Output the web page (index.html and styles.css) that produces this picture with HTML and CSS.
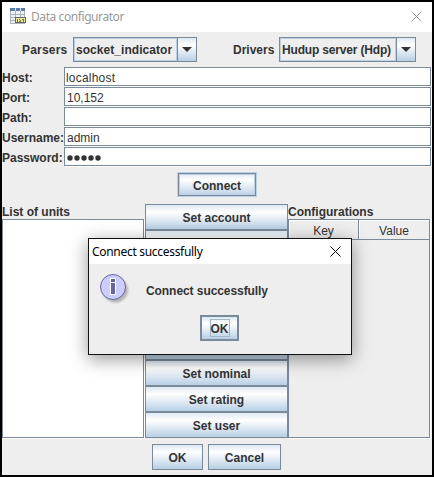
FILE: index.html
```html
<!DOCTYPE html>
<html lang="en">
<head>
<meta charset="utf-8">
<title>Data configurator</title>
<link rel="stylesheet" href="styles.css">
</head>
<body>
<main class="window">
  <header class="titlebar">
    <svg class="app-icon" width="16" height="16" viewBox="0 0 16 16" shape-rendering="crispEdges">
      <path fill="#eef1f5" d="M0 0h15v16H0z"/>
      <path fill="#5b7cab" d="M0 0h15v3H0z"/>
      <path stroke="#a9b2bd" fill="none" d="M.5 3v12.500M5.500 3v12M10.500 3v12M14.500 3v12M0 6.500h15M0 9.500h15M0 12.500h15M0 15.500h15"/>
      <path stroke="#d5deeb" d="M5.500 0v3M10.500 0v3"/>
      <path fill="#eeea9b" d="M5 9h11v6H5z"/>
      <path fill="#666" d="M5 9h11v1H5zM5 14h11v1H5zM5 9h1v6H5zM15 9h1v6h-1z"/>
      <path fill="#77774c" d="M7 11h1v3H7zM9 11h1v1H9zM10 12h1v1h-1zM9 13h2v1H9zM12 11h2v1h-2zM13 12h1v2h-1z"/>
    </svg>
    <h1 class="title">Data configurator</h1>
    <svg class="close" width="11" height="11" viewBox="0 0 11 11"><path d="M.5.5l10 10M10.500.5l-10 10"/></svg>
  </header>

  <div class="selectors">
    <span class="label t-parsers">Parsers</span>
    <div class="combo parsers"><span class="combo-text t-socket">socket_indicator</span><span class="combo-arrow"><svg width="10" height="5"><path d="M0 0h10L5 5z"/></svg></span></div>
    <span class="label drivers-label">Drivers</span>
    <div class="combo drivers"><span class="combo-text t-hudup">Hudup server (Hdp)</span><span class="combo-arrow"><svg width="10" height="5"><path d="M0 0h10L5 5z"/></svg></span></div>
  </div>

  <div class="form">
    <span class="label">Host:</span><div class="field t-host">localhost</div>
    <span class="label">Port:</span><div class="field">10,152</div>
    <span class="label">Path:</span><div class="field"></div>
    <span class="label">Username:</span><div class="field">admin</div>
    <span class="label">Password:</span><div class="field"><svg width="34" height="6"><circle cx="3" cy="3" r="2.700"/><circle cx="10" cy="3" r="2.700"/><circle cx="17" cy="3" r="2.700"/><circle cx="24" cy="3" r="2.700"/><circle cx="31" cy="3" r="2.700"/></svg></div>
  </div>

  <div class="connect-row"><button class="button connect">Connect</button></div>

  <div class="body">
    <section class="units">
      <h2 class="label heading">List of units</h2>
      <div class="list"></div>
    </section>
    <div class="actions">
      <button class="button">Set account</button>
      <button class="button"></button>
      <button class="button"></button>
      <button class="button"></button>
      <button class="button"></button>
      <button class="button"></button>
      <button class="button">Set nominal</button>
      <button class="button">Set rating</button>
      <button class="button">Set user</button>
    </div>
    <section class="configs">
      <h2 class="label heading">Configurations</h2>
      <div class="table"><div class="th">Key</div><div class="th">Value</div></div>
    </section>
  </div>

  <footer class="footer">
    <button class="button ok">OK</button>
    <button class="button cancel">Cancel</button>
  </footer>
</main>

<div class="dialog" role="dialog">
  <div class="dialog-title">
    <span class="dialog-name">Connect successfully</span>
    <svg class="dialog-close" width="11" height="11" viewBox="0 0 11 11"><path d="M.5.5l10 10M10.500.5l-10 10"/></svg>
  </div>
  <div class="message">
    <svg class="info" width="32" height="32" viewBox="0 0 32 32">
      <circle class="info-shadow" cx="15.500" cy="16" r="12.500"/>
      <circle cx="13" cy="13" r="12.500" fill="#ccccff" stroke="#666699"/>
      <path fill="#666699" stroke="#fff" d="M10.500 4.500h5v4h-5zM10.500 8.500h5v12h-5z"/>
    </svg>
    <span class="label t-message">Connect successfully</span>
  </div>
  <div class="dialog-actions"><button class="button default"><span class="focus">OK</span></button></div>
</div>
</body>
</html>
```

FILE: styles.css
```css
* { box-sizing: border-box; }

body {
  margin: 0;
  width: 434px;
  height: 477px;
  overflow: hidden;
  font: 12px/14px "Liberation Sans", Arial, sans-serif;
  color: #333;
}

h1, h2 { margin: 0; font: inherit; }

.window {
  width: 434px;
  height: 477px;
  border: 2px solid #000;
  background: #eee;
}

.titlebar {
  display: flex;
  align-items: center;
  height: 30px;
  padding: 0 10px 0 8px;
  background: #fff;
}

.app-icon { margin-top: -2px; }

.title {
  margin-left: 5px;
  font: 12px/16px "Noto Sans", sans-serif;
  letter-spacing: -0.42px;
  color: #999;
}

.close { margin: -2px 0 0 auto; stroke: #999; }

.label, .combo-text, .button { font-weight: bold; white-space: nowrap; }

.selectors {
  display: flex;
  align-items: center;
  height: 35px;
  padding-left: 20px;
}

.t-parsers { width: 51px; letter-spacing: 0.2px; }

.combo {
  display: flex;
  height: 25px;
  border: 1px solid #7a8a99;
}

.parsers { width: 124px; }
.drivers { width: 137px; }
.drivers-label { width: 46px; margin-left: 36px; }

.combo-text {
  flex: 1;
  padding: 4px 0 0 1px;
  border: 1px solid #b8cfe5;
  line-height: 15px;
}

.t-socket { letter-spacing: 0.05px; }
.t-hudup { letter-spacing: -0.17px; }

.combo-arrow {
  display: flex;
  align-items: center;
  justify-content: center;
  width: 19px;
  border-left: 1px solid #7a8a99;
  background: linear-gradient(#dde8f3, #fff 30%, #b8cfe5);
}

.combo-arrow path { fill: #333; }

.form {
  display: grid;
  grid-template-columns: 62px 368px;
  grid-auto-rows: 20px;
  align-items: center;
}

.form .label { padding-top: 2px; }

.field {
  display: flex;
  align-items: center;
  align-self: start;
  width: 367px;
  height: 19px;
  padding: 2px 0 0 2px;
  border: 1px solid #7a8a99;
  background: #fff;
  box-shadow: 1px 1px #fff;
}

.t-host { padding-left: 1px; letter-spacing: 0.2px; }

.field circle { fill: #333; }

.connect-row { display: flex; justify-content: center; padding: 5px 0 7px; }

.button {
  display: flex;
  align-items: center;
  justify-content: center;
  height: 26px;
  margin: 0;
  padding: 2px 0 0;
  border: 1px solid #7a8a99;
  background: linear-gradient(#dde8f3, #fff 30%, #b8cfe5);
  color: #333;
  font-family: inherit;
  font-size: 12px;
  line-height: 14px;
}

.connect {
  width: 80px;
  height: 25px;
  border-color: #b8cfe5;
  box-shadow: inset 0 0 0 1px #7a8a99, inset 0 0 0 2px #b8cfe5;
}

.body {
  display: grid;
  grid-template-columns: 143px 143px 142px;
  height: 234px;
}

.heading { height: 14px; margin-top: 1px; }

.list {
  width: 142px;
  height: 219px;
  border: 1px solid #7a8a99;
  background: #fff;
  box-shadow: 1px 1px #fff;
}

.actions .button { width: 143px; }

.table {
  display: grid;
  grid-template-columns: 1fr 1fr;
  align-items: start;
  height: 219px;
  border: 1px solid #7a8a99;
  box-shadow: 1px 1px #fff;
}

.th {
  height: 20px;
  border-right: 1px solid #7a8a99;
  border-bottom: 1px solid #7a8a99;
  box-shadow: inset 1px 1px #fff;
  line-height: 23px;
  text-align: center;
}

.th:last-child { border-right: 0; }

.footer { display: flex; gap: 5px; padding: 6px 0 0 150px; }
.ok { width: 51px; }
.cancel { width: 73px; }

.dialog {
  position: absolute;
  left: 88px;
  top: 238px;
  width: 264px;
  height: 117px;
  border: 1px solid #111;
  background: #eee;
  box-shadow: 0 4px 17px rgba(0, 0, 0, .42);
}

.dialog-title {
  display: flex;
  align-items: center;
  justify-content: space-between;
  height: 25px;
  padding: 0 10px 0 3px;
  background: #fff;
  color: #000;
  font-family: "Noto Sans", sans-serif;
}

.dialog-name { letter-spacing: -0.3px; }
.dialog-close { stroke: #000; }

.message { display: flex; height: 51px; padding: 10px 0 0 11px; }
.message .label { margin: 10px 0 0 14px; letter-spacing: -0.07px; }
.info-shadow { fill: #777; opacity: .5; filter: blur(1px); }

.dialog-actions { display: flex; justify-content: center; padding-right: 1px; }

.default { width: 39px; padding: 0; border-width: 2px; }

.focus {
  height: 18px;
  border: 1px solid #a3b8cc;
  line-height: 18px;
}
```
